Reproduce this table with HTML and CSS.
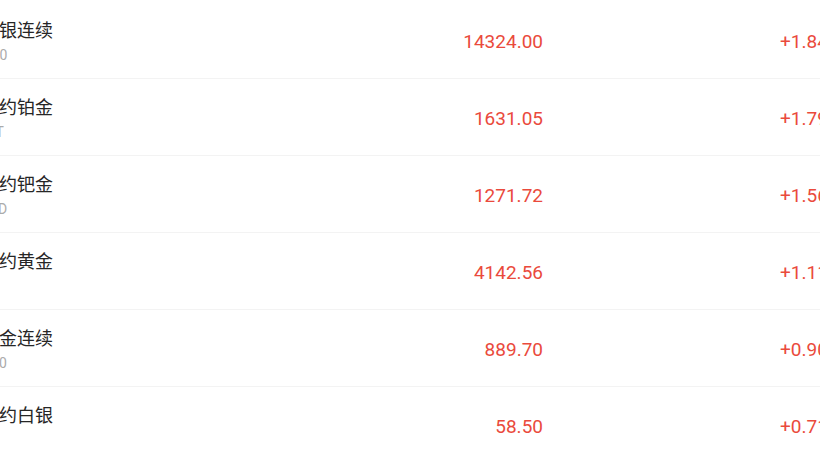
FILE: index.html
```html
<!DOCTYPE html>
<html lang="zh-CN">
<head>
<meta charset="utf-8">
<title>行情列表</title>
<link rel="stylesheet" href="styles.css">
</head>
<body>
<div class="list">
  <div class="row">
    <div class="name-col"><div class="name">白银连续</div><div class="code">AG0</div></div>
    <div class="price">14324.00</div>
    <div class="change">+1.84%</div>
  </div>
  <div class="row">
    <div class="name-col"><div class="name">纽约铂金</div><div class="code">PLT</div></div>
    <div class="price">1631.05</div>
    <div class="change">+1.79%</div>
  </div>
  <div class="row">
    <div class="name-col"><div class="name">纽约钯金</div><div class="code">PAD</div></div>
    <div class="price">1271.72</div>
    <div class="change">+1.56%</div>
  </div>
  <div class="row">
    <div class="name-col"><div class="name">纽约黄金</div><div class="code">GC</div></div>
    <div class="price">4142.56</div>
    <div class="change">+1.11%</div>
  </div>
  <div class="row">
    <div class="name-col"><div class="name">黄金连续</div><div class="code">AU0</div></div>
    <div class="price">889.70</div>
    <div class="change">+0.90%</div>
  </div>
  <div class="row">
    <div class="name-col"><div class="name">纽约白银</div><div class="code">SI</div></div>
    <div class="price">58.50</div>
    <div class="change">+0.71%</div>
  </div>
</div>
</body>
</html>
```
FILE: styles.css
```css
html, body {
  margin: 0;
  padding: 0;
  background: #ffffff;
  overflow: hidden;
}
body {
  width: 820px;
  height: 460px;
  font-family: Roboto, "Noto Sans CJK SC", sans-serif;
}
.list {
  margin-top: 2px;
  margin-left: -19px;
  width: 900px;
}
.row {
  display: grid;
  grid-template-columns: 382px 180px 1fr;
  height: 76px;
  border-bottom: 1px solid #f3f3f3;
}
.name-col {
  padding-top: 15px;
}
.name {
  font-family: "Noto Sans CJK SC", sans-serif;
  font-size: 18px;
  line-height: 24px;
  color: #262626;
}
.code {
  margin-top: 4px;
  font-family: Roboto, sans-serif;
  font-size: 14px;
  line-height: 20px;
  color: #ababab;
}
.price, .change {
  align-self: center;
  margin-top: 3px;
  font-size: 19px;
  line-height: 24px;
  color: #ea4a3c;
}
.price {
  text-align: right;
}
.change {
  padding-left: 237px;
  white-space: nowrap;
}
```
